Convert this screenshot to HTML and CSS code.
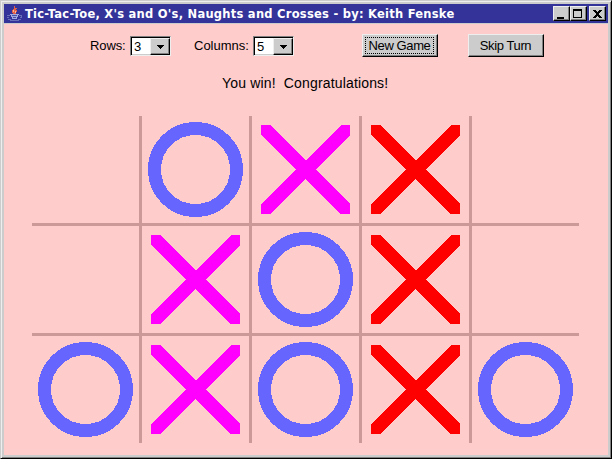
FILE: index.html
```
<!DOCTYPE html>
<html lang="en">
<head>
<meta charset="utf-8">
<title>Tic-Tac-Toe</title>
<link rel="stylesheet" href="styles.css">
</head>
<body>
<svg class="defs" width="0" height="0">
  <symbol id="x" viewBox="0 0 107 107"><path d="M9 9H18L53.5 44.5L89 9H98V19L63.5 53.5L98 88V98H88L53.5 62.5L19 98H9V88L44 53.5L9 19Z"/></symbol>
  <symbol id="o" viewBox="0 0 107 107"><circle cx="53.5" cy="53.5" r="41" fill="none" stroke="currentColor" stroke-width="13"/></symbol>
</svg>
<div class="window">
  <header class="titlebar">
    <svg class="cup" width="16" height="16" viewBox="0 0 16 16">
      <path fill="#e06048" d="M7 0h1v2h2v1h-1v1h1v2h-1v2h-3v-1h-1v-3h1v-1h1z"/>
      <path fill="#f8b890" d="M6 4h1v2h-1zM8 5h1v2h-1z"/>
      <path fill="#6870b8" d="M0 9h3v1h-3zM0 11h2v1h-2zM12 9h3v3h-2v-1h1v-1h-2zM1 13h3v1h7v-1h3v1h-2v1h-9v-1h-2z"/>
      <path fill="#a0a8e0" d="M3 8h9v1h-1v2h-1v2h-5v-2h-1v-2h-1z"/>
      <path fill="#4a50a0" d="M5 9h5v1h-5zM6 11h3v1h-3z"/>
    </svg>
    <h1>Tic-Tac-Toe, X's and O's, Naughts and Crosses - by: Keith Fenske</h1>
    <div class="controls">
      <button aria-label="Minimize"><svg width="12" height="11"><path d="M2 9h7v2h-7z"/></svg></button>
      <button aria-label="Maximize"><svg width="12" height="11"><path fill-rule="evenodd" d="M1 1h9v9h-9zM2 3v6h7v-6z"/></svg></button>
      <button class="close" aria-label="Close"><svg width="12" height="11"><path d="M2 2h3v1h1v1h1v-1h1v-1h3v1h-1v1h-1v1h-1v2h1v1h1v1h1v1h-3v-1h-1v-1h-1v1h-1v1h-3v-1h1v-1h1v-1h1v-2h-1v-1h-1v-1h-1z"/></svg></button>
    </div>
  </header>
  <main>
    <div class="toolbar">
      <span class="label rows">Rows:</span>
      <div class="combo"><span>3</span><i><svg width="7" height="4"><path d="M0 0h7v1h-1v1h-1v1h-1v1h-1v-1h-1v-1h-1v-1h-1z"/></svg></i></div>
      <span class="label cols">Columns:</span>
      <div class="combo"><span>5</span><i><svg width="7" height="4"><path d="M0 0h7v1h-1v1h-1v1h-1v1h-1v-1h-1v-1h-1v-1h-1z"/></svg></i></div>
      <button class="action new focused"><span>New Game</span></button>
      <button class="action skip"><span>Skip Turn</span></button>
    </div>
    <p class="status"><span>You win!  Congratulations!</span></p>
    <div class="board">
      <div></div>
      <div class="o"><svg><use href="#o"/></svg></div>
      <div class="x"><svg><use href="#x"/></svg></div>
      <div class="x win"><svg><use href="#x"/></svg></div>
      <div></div>
      <div></div>
      <div class="x"><svg><use href="#x"/></svg></div>
      <div class="o"><svg><use href="#o"/></svg></div>
      <div class="x win"><svg><use href="#x"/></svg></div>
      <div></div>
      <div class="o"><svg><use href="#o"/></svg></div>
      <div class="x"><svg><use href="#x"/></svg></div>
      <div class="o"><svg><use href="#o"/></svg></div>
      <div class="x win"><svg><use href="#x"/></svg></div>
      <div class="o"><svg><use href="#o"/></svg></div>
    </div>
  </main>
</div>
</body>
</html>
```
FILE: styles.css
```
* { box-sizing: border-box; }
body { margin: 0; overflow: hidden; font-family: "Liberation Sans", Arial, sans-serif; color: #000; }
svg { display: block; shape-rendering: crispEdges; }
.defs { position: absolute; }
.window {
  width: 612px; height: 459px; padding: 3px;
  background: #ccc;
  border: 1px solid; border-color: #ccc #000 #000 #ccc;
  box-shadow: inset 1px 1px #eee, inset -1px -1px #808080;
}
.titlebar { display: flex; align-items: center; height: 19px; background: #339; color: #fff; padding: 0 3px; }
.cup { flex: none; margin-right: 2px; }
.titlebar h1 {
  margin: 0; flex: none; width: 528px; font: bold 11.5px/18px "DejaVu Sans", Verdana, sans-serif;
  letter-spacing: 0.25px; white-space: nowrap;
}
.controls { display: flex; flex: none; }
.controls button {
  width: 17px; height: 15px; padding: 1px; border: 1px solid; border-color: #eee #000 #000 #eee;
  background: #ccc; box-shadow: inset -1px -1px #808080;
}
.controls .close { margin-left: 2px; }
main { margin-top: 1px; height: 431px; background: #fcc; padding-top: 10px; }
.toolbar { display: flex; align-items: center; height: 23px; font-size: 13px; }
.label { flex: none; line-height: 22px; white-space: nowrap; }
.rows { margin-left: 86px; width: 40px; letter-spacing: -0.1px; }
.cols { margin-left: 23px; width: 59px; }
.combo {
  display: flex; flex: none; width: 41px; height: 20px; margin-top: 1px;
  border: 1px solid; border-color: #808080 #eee #eee #808080; background: #fff; box-shadow: inset 1px 1px #000, inset -1px -1px #ccc;
}
.combo span { width: 19px; padding-left: 3px; line-height: 19px; }
.combo i {
  display: flex; align-items: center; justify-content: center; width: 20px; height: 17px; margin-top: 1px;
  background: #ccc; border: 1px solid; border-color: #eee #000 #000 #eee; box-shadow: inset -1px -1px #808080;
}
.action {
  flex: none; width: 76px; height: 23px; padding: 2px 3px 3px 2px; font: 13px/16px "Liberation Sans", Arial, sans-serif;
  background: #ccc; border: 1px solid; border-color: #eee #000 #000 #eee; box-shadow: inset -1px -1px #808080;
  white-space: nowrap; color: #000; letter-spacing: -0.4px;
}
.action span { display: block; height: 17px; border: 1px solid transparent; line-height: 15px; }
.focused span { border: 1px dotted #000; }
.new { margin-left: 68px; }
.skip { margin-left: 30px; }
.status { margin: 17px 0 0; height: 18px; font-size: 14px; letter-spacing: 0.16px; line-height: 18px; white-space: pre; padding-left: 218px; }
.board {
  display: grid; grid-template-columns: repeat(5, 107px); grid-template-rows: repeat(3, 107px); gap: 3px;
  width: 547px; margin: 24px 0 0 28px; background: #c99;
}
.board div { background: #fcc; }
.board svg { width: 107px; height: 107px; }
.o { color: #66f; }
.x { fill: #f0f; }
.x.win { fill: #f00; }
```
